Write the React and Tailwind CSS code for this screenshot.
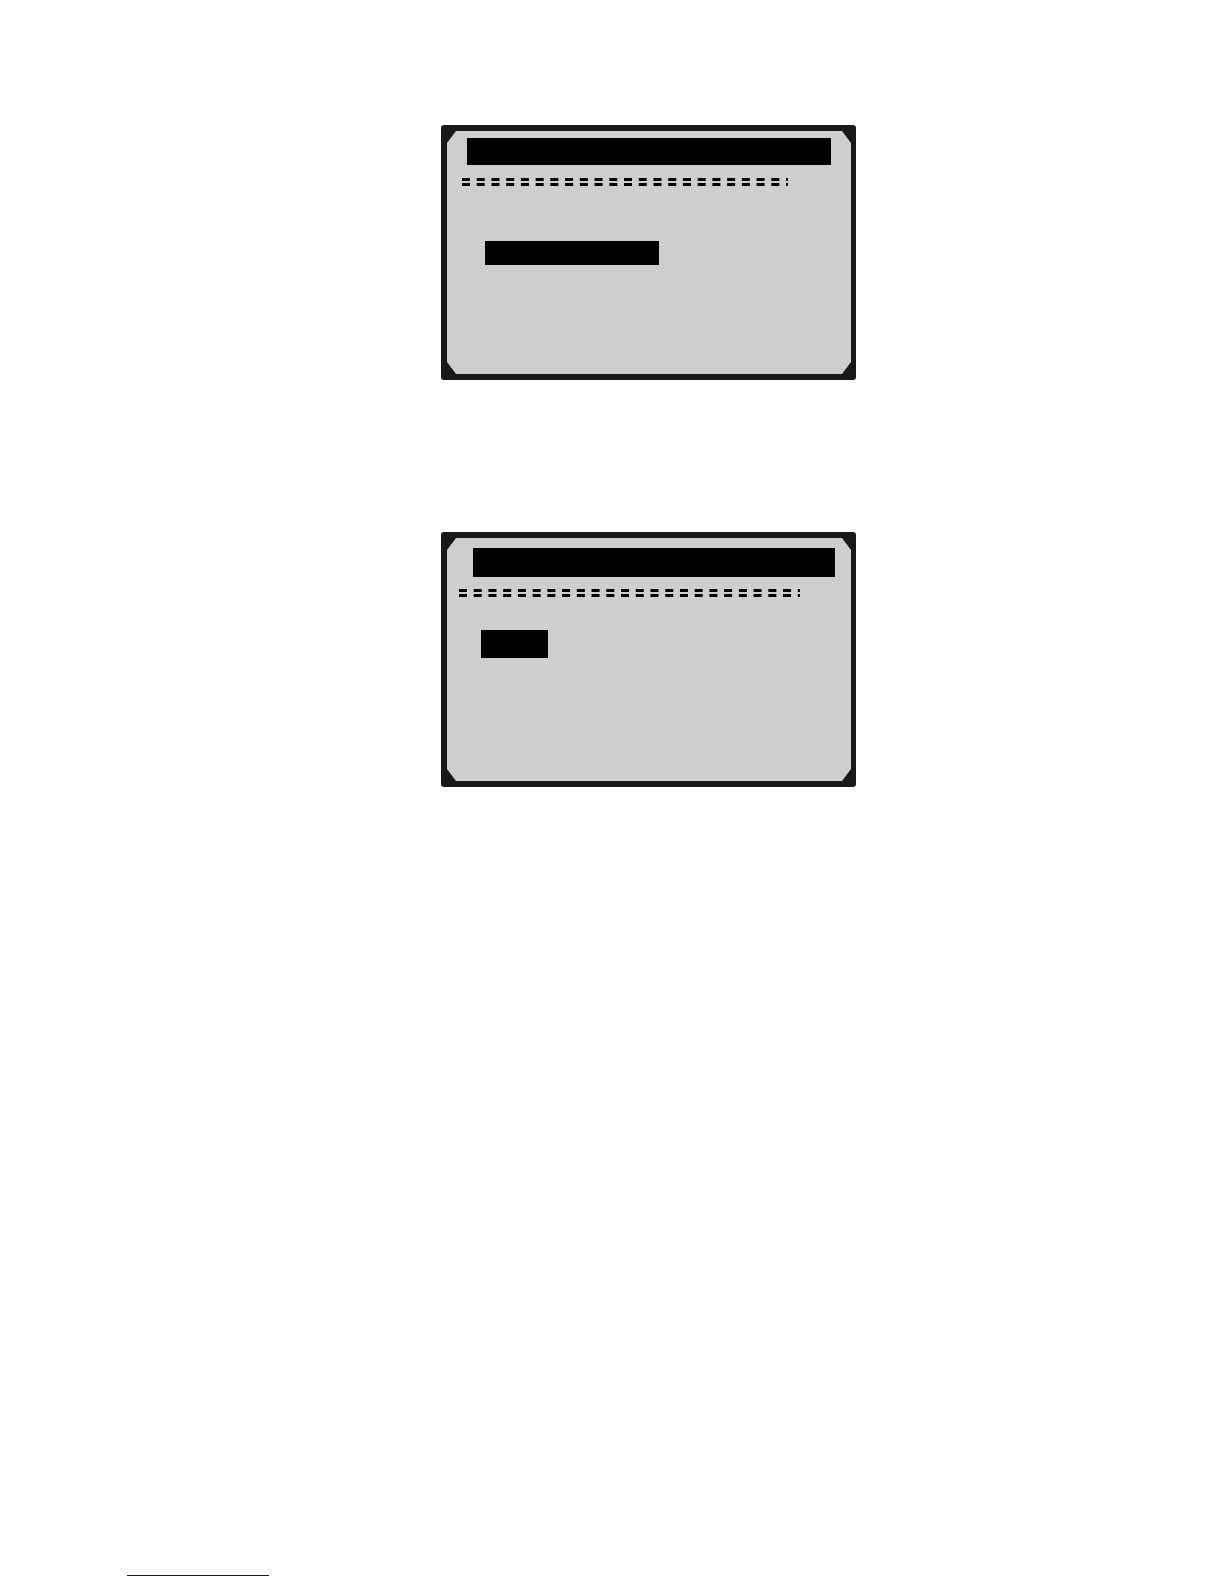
function DashedRule({ className }) {
  return (
    <svg className={`block h-2 ${className}`} aria-hidden="true">
      <line x1="0" y1="1.5" x2="100%" y2="1.5" stroke="#000" strokeWidth="3" strokeDasharray="8 6.73" />
      <line x1="0" y1="6.5" x2="100%" y2="6.5" stroke="#000" strokeWidth="3" strokeDasharray="8 6.73" />
    </svg>
  );
}

function Display({ children }) {
  return (
    <section className="w-full max-w-[415px] rounded-[3px] bg-[#1a1917] py-1.5 pl-1.5 pr-[5px]">
      <div className="h-[243px] bg-[#cecece] [clip-path:polygon(9px_0,calc(100%-9px)_0,100%_12px,100%_calc(100%-12px),calc(100%-9px)_100%,9px_100%,0_calc(100%-12px),0_12px)]">
        {children}
      </div>
    </section>
  );
}

export default function App() {
  return (
    <div className="flex min-h-screen flex-col bg-white font-['Liberation_Sans',sans-serif]">
      <main className="flex flex-col items-center gap-[152px] pl-[73px] pt-[125px]">
        <Display>
          <div className="flex flex-col pt-[7px]">
            <div className="ml-5 mr-5 h-[27px] bg-black" />
            <DashedRule className="ml-[15px] mt-[13px] w-[326px]" />
            <div className="ml-[38px] mt-[55px] h-6 w-[174px] bg-black" />
          </div>
        </Display>
        <Display>
          <div className="flex flex-col pt-2.5">
            <div className="ml-[26px] mr-4 h-[29px] bg-black" />
            <DashedRule className="ml-3 mt-3 w-[341px]" />
            <div className="ml-[34px] mt-[33px] h-7 w-[67px] bg-black" />
          </div>
        </Display>
      </main>
      <footer className="mt-auto pb-2 pl-[127px]">
        <a href="#" aria-label="Page link" className="block h-px w-[142px] bg-[#101080]" />
      </footer>
    </div>
  );
}
